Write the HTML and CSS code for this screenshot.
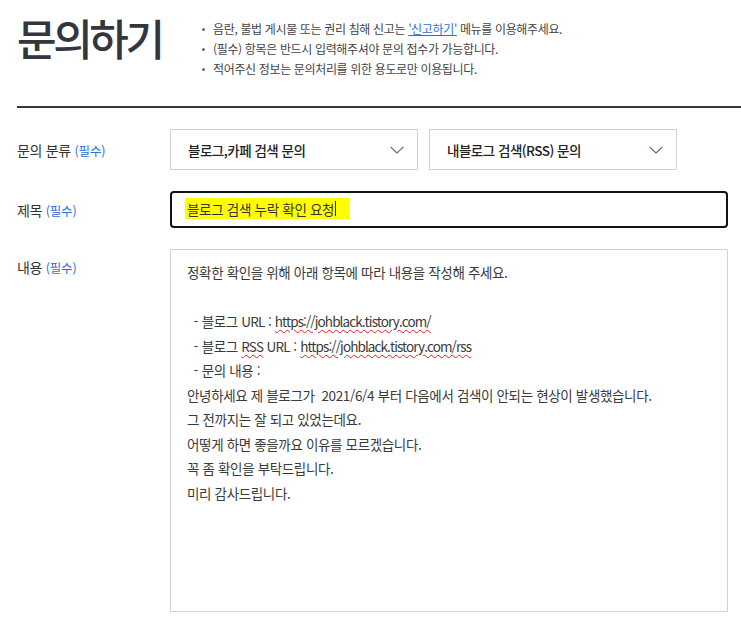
FILE: index.html
```html
<!DOCTYPE html>
<html lang="ko">
<head>
<meta charset="utf-8">
<title>문의하기</title>
<link rel="stylesheet" href="styles.css">
</head>
<body>
<div class="page">
  <header class="head">
    <h1 class="title">문의하기</h1>
    <ul class="notes">
      <li>음란, 불법 게시물 또는 권리 침해 신고는 <a class="link" href="#">'신고하기'</a> 메뉴를 이용해주세요.</li>
      <li>(필수) 항목은 반드시 입력해주셔야 문의 접수가 가능합니다.</li>
      <li>적어주신 정보는 문의처리를 위한 용도로만 이용됩니다.</li>
    </ul>
  </header>
  <div class="rule"></div>
  <form class="form">
    <div class="row row-cat">
      <div class="label">문의 분류 <span class="req">(필수)</span></div>
      <div class="selects">
        <div class="select"><span>블로그,카페 검색 문의</span>
          <svg class="chev" width="14" height="8" viewBox="0 0 14 8"><path d="M0.5 0.8 L7 7 L13.5 0.8" fill="none" stroke="#5f6673" stroke-width="1.1"/></svg>
        </div>
        <div class="select"><span>내블로그 검색(RSS) 문의</span>
          <svg class="chev" width="14" height="8" viewBox="0 0 14 8"><path d="M0.5 0.8 L7 7 L13.5 0.8" fill="none" stroke="#5f6673" stroke-width="1.1"/></svg>
        </div>
      </div>
    </div>
    <div class="row row-subj">
      <div class="label">제목 <span class="req">(필수)</span></div>
      <div class="input"><span class="hl">블로그 검색 누락 확인 요청<span class="caret"></span></span></div>
    </div>
    <div class="row row-body">
      <div class="label label-top">내용 <span class="req">(필수)</span></div>
      <div class="area">
        <p>정확한 확인을 위해 아래 항목에 따라 내용을 작성해 주세요.</p>
        <p>&nbsp;</p>
        <p>&nbsp; - 블로그 <span class="lat">URL</span> : <span class="sp url">https://johblack.tistory.com/</span></p>
        <p>&nbsp; - 블로그 <span class="sp lat">RSS</span> <span class="lat">URL</span> : <span class="sp url">https://johblack.tistory.com/rss</span></p>
        <p>&nbsp; - 문의 내용 :</p>
        <p>안녕하세요 제 블로그가 &nbsp;2021/6/4 부터 다음에서 검색이 안되는 현상이 발생했습니다.</p>
        <p>그 전까지는 잘 되고 있었는데요.</p>
        <p>어떻게 하면 좋을까요 이유를 모르겠습니다.</p>
        <p>꼭 좀 확인을 부탁드립니다.</p>
        <p>미리 감사드립니다.</p>
      </div>
    </div>
  </form>
</div>
</body>
</html>
```
FILE: styles.css
```css
* { box-sizing: border-box; }
html, body { margin: 0; padding: 0; background: #fff; }
body {
  font-family: "Noto Sans CJK KR", "Noto Sans", sans-serif;
  color: #333;
  overflow: hidden;
}
.page { padding-left: 17px; width: 741px; }
.head {
  display: flex;
  align-items: flex-start;
  height: 106px;
}
.title {
  margin: 0;
  padding-top: 7px;
  font-size: 43px;
  line-height: 60px;
  font-weight: 500;
  letter-spacing: -3.4px;
  color: #33363d;
  width: 183px;
  flex: none;
}
.notes {
  margin: 0;
  padding: 19px 0 0 0;
  list-style: none;
  font-size: 12px;
  line-height: 20px;
  color: #444;
  letter-spacing: -0.35px;
}
.notes li { position: relative; padding-left: 13px; }
.notes li::before {
  content: "";
  position: absolute;
  left: 2px; top: 9px;
  width: 3px; height: 3px;
  border-radius: 50%;
  background: #666;
}
.link { color: #2f6fdb; text-decoration: underline; }
.rule { height: 2px; background: #343841; margin-bottom: 21px; }
.form { display: flex; flex-direction: column; gap: 21px; }
.row { display: flex; align-items: center; }
.row-body { align-items: flex-start; }
.label {
  width: 153px;
  flex: none;
  font-size: 14px;
  color: #333;
  letter-spacing: -0.3px;
}
.label-top { padding-top: 8px; }
.req { color: #2f6fdb; font-size: 12.5px; letter-spacing: -0.2px; }
.selects { display: flex; gap: 11px; }
.select {
  width: 248px;
  height: 41px;
  border: 1px solid #d3d3d3;
  display: flex;
  align-items: center;
  justify-content: space-between;
  padding: 0 13px 0 17px;
  font-size: 13.5px;
  font-weight: 500;
  color: #222;
  letter-spacing: -0.5px;
}
.chev { display: block; margin-top: 1px; }
.input {
  width: 558px;
  height: 37px;
  border: 2px solid #111;
  border-radius: 4px;
  display: flex;
  align-items: center;
  padding-left: 13px;
  font-size: 13.5px;
  color: #333;
  letter-spacing: -0.3px;
}
.hl {
  background: #ffff00;
  display: inline-flex;
  align-items: center;
  height: 21px;
  padding: 0 14px 0 2px;
  margin-top: -2px;
}
.caret { display: inline-block; width: 1px; height: 15px; background: #222; margin-left: 1px; }
.area {
  width: 558px;
  height: 363px;
  border: 1px solid #d3d3d3;
  padding: 10px 16px;
  font-size: 13.5px;
  line-height: 24.5px;
  color: #3a3a3a;
  letter-spacing: -0.35px;
}
.area p { margin: 0; white-space: nowrap; }
.lat { letter-spacing: -0.8px; }
.url { letter-spacing: -0.9px; }
.sp { text-decoration: underline wavy #e02020; text-decoration-thickness: 1px; text-underline-offset: 2px; }
```
